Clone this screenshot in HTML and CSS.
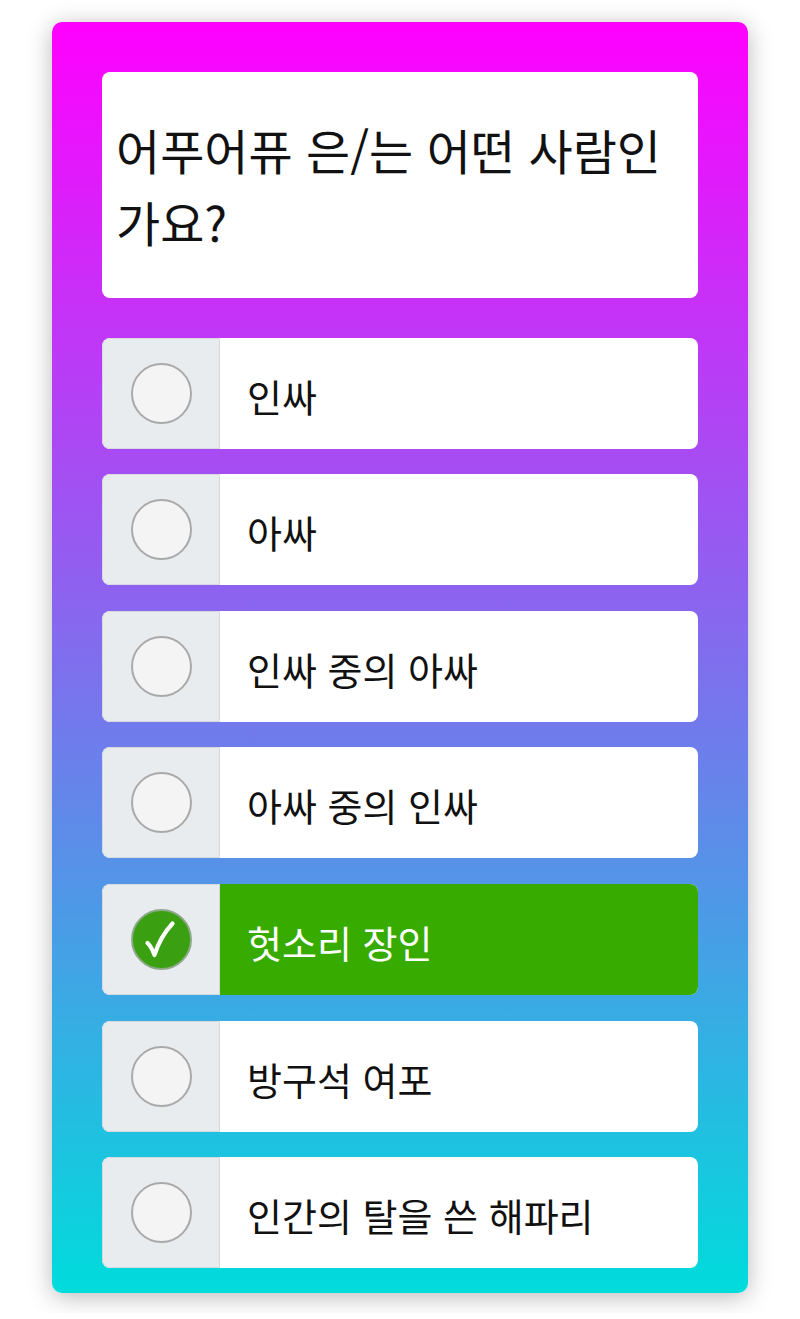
FILE: index.html
```html
<!DOCTYPE html>
<html lang="ko">
<head>
<meta charset="utf-8">
<title>Quiz</title>
<link rel="stylesheet" href="styles.css">
</head>
<body>
<div class="card">
  <div class="question">어푸어퓨 은/는 어떤 사람인가요?</div>
  <div class="options">
    <div class="option"><div class="mark"><span class="radio"></span></div><div class="label">인싸</div></div>
    <div class="option"><div class="mark"><span class="radio"></span></div><div class="label">아싸</div></div>
    <div class="option"><div class="mark"><span class="radio"></span></div><div class="label">인싸 중의 아싸</div></div>
    <div class="option"><div class="mark"><span class="radio"></span></div><div class="label">아싸 중의 인싸</div></div>
    <div class="option selected"><div class="mark"><span class="radio checked"><svg viewBox="0 0 57 57" width="57" height="57"><path d="M14.5 32 Q18 35 21.5 44 Q27 26 39.5 12.5" fill="none" stroke="#fff" stroke-width="4.2" stroke-linecap="round" stroke-linejoin="round"/></svg></span></div><div class="label">헛소리 장인</div></div>
    <div class="option"><div class="mark"><span class="radio"></span></div><div class="label">방구석 여포</div></div>
    <div class="option"><div class="mark"><span class="radio"></span></div><div class="label">인간의 탈을 쓴 해파리</div></div>
  </div>
</div>
</body>
</html>
```

FILE: styles.css
```css
html, body {
  margin: 0;
  padding: 0;
  background: #ffffff;
}
body {
  font-family: "Noto Sans CJK KR", "Noto Sans", sans-serif;
  color: #111;
  padding-top: 21.5px;
  padding-bottom: 20px;
}
.card {
  width: 596px;
  margin: 0 52px;
  padding: 50px 50px 25px;
  border-radius: 10px;
  background: linear-gradient(to bottom, #ff00ff, #00dcdc);
  box-shadow: 0 4px 24px rgba(0, 0, 0, 0.28);
}
.question {
  background: #fff;
  border-radius: 8px;
  height: 226.5px;
  box-sizing: border-box;
  padding: 41px 14px 0;
  font-size: 48px;
  line-height: 72px;
  margin-bottom: 39.5px;
}
.options {
  display: flex;
  flex-direction: column;
  gap: 25.67px;
}
.option {
  display: flex;
  height: 111px;
  border-radius: 8px;
  background: #fff;
  overflow: hidden;
}
.mark {
  width: 118px;
  box-sizing: border-box;
  background: #e9ecef;
  border: 1px solid #d6dadf;
  border-radius: 8px 0 0 8px;
  display: flex;
  align-items: center;
  justify-content: center;
}
.radio {
  width: 61px;
  height: 61px;
  box-sizing: border-box;
  border-radius: 50%;
  border: 2px solid #a9a9a9;
  background: #f4f4f4;
  display: flex;
  align-items: center;
  justify-content: center;
}
.radio.checked {
  background: #3aa012;
  border-color: #8fa88a;
}
.label {
  flex: 1;
  display: flex;
  align-items: center;
  padding: 4px 0 0 27px;
  font-size: 38px;
  color: #111;
}
.option.selected .label {
  background: #38ab00;
  color: #fff;
}
```
